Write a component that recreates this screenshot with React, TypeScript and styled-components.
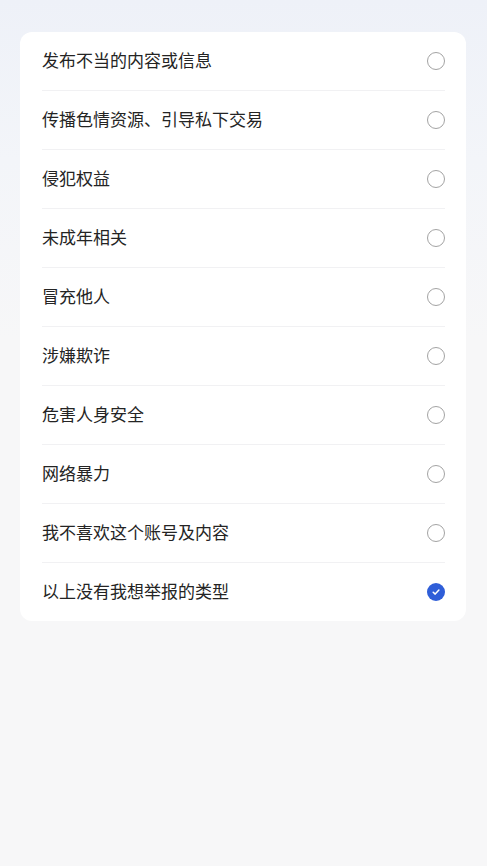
import React, {useState} from 'react'
import styled, {createGlobalStyle} from 'styled-components'

const GlobalStyle = createGlobalStyle`
  html, body {
    margin: 0;
    padding: 0;
    height: 100%;
  }
  body {
    background: #f7f7f8;
    font-family: "Noto Sans CJK SC", "Noto Sans", sans-serif;
  }
`

const Page = styled.div`
  min-height: 866px;
  box-sizing: border-box;
  padding: 32px 21px 0 20px;
  background: linear-gradient(180deg, #eef1f8 0px, #f3f5f9 160px, #f7f7f8 340px);
`

const Card = styled.ul`
  list-style: none;
  margin: 0;
  padding: 0;
  background: #fff;
  border-radius: 12px;
  overflow: hidden;
`

const Row = styled.li`
  display: flex;
  align-items: center;
  justify-content: space-between;
  height: 58px;
  margin: 0 21px 0 22px;
  border-bottom: 1px solid #f1f1f3;
  cursor: pointer;

  &:last-child {
    border-bottom: none;
  }
`

const Label = styled.span`
  font-size: 17px;
  line-height: 1;
  color: #242424;
  margin-top: -3px;
`

const Radio = styled.span<{$checked: boolean}>`
  display: flex;
  align-items: center;
  justify-content: center;
  width: 18px;
  height: 18px;
  box-sizing: border-box;
  border-radius: 50%;
  border: ${p => p.$checked ? 'none' : '1.5px solid #a3a3a3'};
  background: ${p => p.$checked ? '#2f5ed8' : 'transparent'};
`

const reasons = [
  '发布不当的内容或信息',
  '传播色情资源、引导私下交易',
  '侵犯权益',
  '未成年相关',
  '冒充他人',
  '涉嫌欺诈',
  '危害人身安全',
  '网络暴力',
  '我不喜欢这个账号及内容',
  '以上没有我想举报的类型',
]

const App = () => {
  const [selected, setSelected] = useState(reasons.length - 1)

  return (
    <>
      <GlobalStyle />
      <Page>
        <Card>
          {reasons.map((r, i) => (
            <Row key={r} onClick={() => setSelected(i)}>
              <Label>{r}</Label>
              <Radio $checked={selected === i}>
                {selected === i && (
                  <svg width="10" height="10" viewBox="0 0 10 10">
                    <path d="M2.2 5.2 L4.2 7.1 L7.9 3.1" fill="none" stroke="#fff" strokeWidth="1.5" strokeLinecap="round" strokeLinejoin="round" />
                  </svg>
                )}
              </Radio>
            </Row>
          ))}
        </Card>
      </Page>
    </>
  )
}

export default App
